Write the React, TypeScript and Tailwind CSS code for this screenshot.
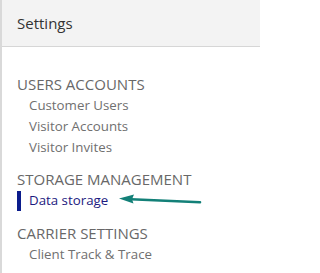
import React from "react";

const font = { fontFamily: '"Open Sans", "Noto Sans", sans-serif' };

function Heading({ children }: { children: React.ReactNode }) {
  return <div className="pl-[15px] text-[15px] leading-[22px] text-[#686868]">{children}</div>;
}

function Item({ children }: { children: React.ReactNode }) {
  return <div className="pl-[27px] text-[13.3px] leading-[21px] text-[#707070]">{children}</div>;
}

export default function App() {
  return (
    <div className="w-[260px] h-[273px] bg-white border-l-2 border-[#d9d9d9] overflow-hidden" style={font}>
      <div className="h-[47px] bg-[#f3f3f3] border-b border-[#d6d6d6] flex items-center pl-[15px]">
        <span className="text-[15px] text-[#333333]">Settings</span>
      </div>
      <div className="pt-[26px]">
        <Heading>USERS ACCOUNTS</Heading>
        <Item>Customer Users</Item>
        <Item>Visitor Accounts</Item>
        <Item>Visitor Invites</Item>
        <div className="mt-[10px]">
          <Heading>STORAGE MANAGEMENT</Heading>
        </div>
        <div className="relative flex items-center h-[22px] pl-[15px]">
          <div className="w-[4px] h-[20px] bg-[#0b1c8c]" />
          <span className="pl-[8px] text-[13.3px] text-[#1c1a80]">Data storage</span>
          <svg className="absolute left-[115px] top-[3px]" width="90" height="14" viewBox="0 0 90 14">
            <path d="M14 6.3 L83 9.2" stroke="#138078" strokeWidth="2.6" strokeLinecap="round" />
            <path d="M2 5.5 L17 1.5 L15 6.3 L16.5 10.5 Z" fill="#138078" />
          </svg>
        </div>
        <div className="mt-[10px]">
          <Heading>CARRIER SETTINGS</Heading>
        </div>
        <Item>Client Track &amp; Trace</Item>
      </div>
    </div>
  );
}
